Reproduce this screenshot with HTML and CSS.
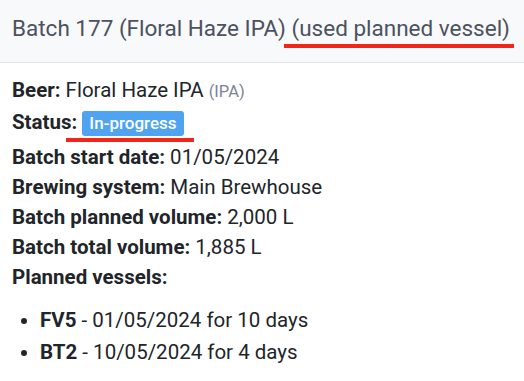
FILE: index.html
```html
<!DOCTYPE html>
<html lang="en">
<head>
    <meta charset="UTF-8">
    <title>Batch 177</title>
    <link rel="stylesheet" href="styles.css">
</head>
<body>
    <div class="card">
        <div class="card-header">
            Batch 177 (Floral Haze IPA) <span class="mark">(used planned vessel)</span>
        </div>
        <div class="card-body">
            <p><b>Beer:</b> Floral Haze IPA <span class="muted">(IPA)</span></p>
            <p class="status-row"><b>Status:</b> <span class="badge">In-progress</span></p>
            <p><b>Batch start date:</b> 01/05/2024</p>
            <p><b>Brewing system:</b> Main Brewhouse</p>
            <p><b>Batch planned volume:</b> 2,000 L</p>
            <p><b>Batch total volume:</b> 1,885 L</p>
            <p><b>Planned vessels:</b></p>
            <ul class="vessels">
                <li><b>FV5</b> - 01/05/2024 for 10 days</li>
                <li><b>BT2</b> - 10/05/2024 for 4 days</li>
            </ul>
        </div>
    </div>
</body>
</html>
```

FILE: styles.css
```css
body {
    margin: 0;
    font-family: Roboto, "Liberation Sans", sans-serif;
    background-color: #ffffff;
    color: #212529;
}
.card-header {
    background-color: #f8f9fb;
    border-bottom: 1px solid #e3e5e8;
    height: 63px;
    box-sizing: border-box;
    padding: 15px 12px 0;
    font-size: 22.5px;
    line-height: 26px;
    color: #4b5260;
    white-space: nowrap;
}
.mark {
    position: relative;
}
.mark::after {
    content: "";
    position: absolute;
    left: -7px;
    right: -4px;
    bottom: -7px;
    height: 4px;
    background-color: #f0261b;
}
.card-body {
    padding: 12px 12px 0;
    font-size: 20.5px;
}
.card-body p {
    margin: 0;
    line-height: 30px;
}
.card-body b {
    font-weight: 700;
}
.muted {
    color: #7b8494;
    font-size: 16.5px;
}
.status-row {
    padding-bottom: 5px;
}
.badge {
    position: relative;
    display: inline-block;
    background-color: #4fa3f1;
    color: #ffffff;
    font-size: 17px;
    font-weight: 500;
    line-height: 23px;
    padding: 1px 7px;
    border-radius: 3px;
}
.badge::after {
    content: "";
    position: absolute;
    left: -16px;
    right: -10px;
    bottom: -6px;
    height: 4px;
    background-color: #f0261b;
}
.vessels {
    margin: 12px 0 0;
    padding-left: 28px;
}
.vessels li {
    line-height: 32px;
}
```
